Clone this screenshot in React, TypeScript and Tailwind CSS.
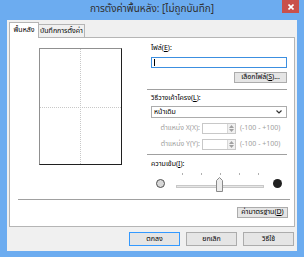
import React from "react";

function Spin({ label }: { label: string }) {
  return (
    <div className="flex items-center h-[11px]">
      <div className="w-[50px] text-right text-[#a0a0a0] pr-[1px] leading-none whitespace-nowrap">{label}</div>
      <div className="ml-[1px] w-[34px] h-[11px] border border-[#c8c8c8] bg-white flex justify-end">
        <div className="w-[8px] h-full border-l border-[#d8d8d8] flex flex-col items-center justify-center gap-[1px] bg-[#f0f0f0]">
          <svg width="5" height="3" viewBox="0 0 5 3"><path d="M0 3 L2.5 0 L5 3 Z" fill="#a0a0a0" /></svg>
          <svg width="5" height="3" viewBox="0 0 5 3"><path d="M0 0 L2.5 3 L5 0 Z" fill="#a0a0a0" /></svg>
        </div>
      </div>
      <div className="ml-[4px] text-[#a0a0a0] leading-none whitespace-nowrap">(-100 - +100)</div>
    </div>
  );
}

export default function App() {
  return (
    <div className="w-[304px] h-[257px] bg-[#6cacf0] flex flex-col text-[7px] text-black whitespace-nowrap font-['Tahoma','Noto_Sans_Thai','Noto_Sans','DejaVu_Sans',sans-serif]">
      <div className="h-[20px] relative flex items-center justify-center text-[10px] text-[#303030]">
        <span className="-mt-[1px]">การตั้งค่าพื้นหลัง: [ไม่ถูกบันทึก]</span>
        <div className="absolute right-[5px] top-0 w-[17px] h-[13px] bg-[#c9504b] flex items-center justify-center">
          <svg width="6" height="6" viewBox="0 0 6 6"><path d="M0.5 0.5 L5.5 5.5 M5.5 0.5 L0.5 5.5" stroke="white" strokeWidth="1.6" /></svg>
        </div>
      </div>
      <div className="flex-1 flex flex-col px-[7px] pb-[6px]">
        <div className="flex-1 bg-[#f0f0f0] flex flex-col px-[2px] pt-[2px]">
          <div className="h-[15px] flex items-end relative z-10">
            <div className="w-[30px] h-[16px] -mb-[1px] bg-white border border-b-0 border-[#b5b5b5] flex items-center justify-center leading-none">พื้นหลัง</div>
            <div className="w-[46px] h-[13px] bg-[#f0f0f0] border border-l-0 border-b-0 border-[#b5b5b5] flex items-center justify-center leading-none">บันทึกการตั้งค่า</div>
          </div>
          <div className="h-[190px] bg-white border border-[#b5b5b5] flex flex-col">
            <div className="flex items-start h-[161px]">
              <div className="ml-[29px] mt-[10px] w-[83px] h-[117px] border border-[#909090] border-r-[#202020] border-b-[#202020] relative">
                <div className="absolute left-[40px] top-0 bottom-0 border-l border-dotted border-[#c8c8c8]" />
                <div className="absolute top-[58px] left-0 right-0 border-t border-dotted border-[#c8c8c8]" />
              </div>
              <div className="ml-[29px] mt-[5px] w-[136px] flex flex-col">
                <div className="h-[10px] flex items-center leading-none">ไฟล์(<u>E</u>):</div>
                <div className="mt-[4px] h-[11px] border border-[#3c8fe0] bg-white flex items-center pl-[2px]">
                  <div className="w-px h-[7px] bg-black" />
                </div>
                <div className="mt-[4px] flex justify-end">
                  <div className="w-[53px] h-[11px] border border-[#acacac] bg-[#e5e5e5] flex items-center justify-center leading-none">เลือกไฟล์(<u>S</u>)...</div>
                </div>
                <div className="mt-[6px] -ml-[4px] h-px bg-[#a0a0a0]" />
                <div className="mt-[3px] h-[10px] flex items-center leading-none">วิธีวางเค้าโครง(<u>L</u>):</div>
                <div className="mt-[3px] h-[12px] border border-[#acacac] bg-white flex items-center justify-between pl-[2px] pr-[4px] leading-none">
                  <span>หน้าเดิม</span>
                  <svg width="6" height="4" viewBox="0 0 6 4"><path d="M0.5 0.5 L3 3 L5.5 0.5" stroke="#333" strokeWidth="1.2" fill="none" /></svg>
                </div>
                <div className="mt-[5px]"><Spin label="ตำแหน่ง X(X):" /></div>
                <div className="mt-[5px]"><Spin label="ตำแหน่ง Y(Y):" /></div>
                <div className="mt-[4px] -ml-[4px] h-px bg-[#a0a0a0]" />
                <div className="mt-[4px] h-[10px] flex items-center leading-none">ความเข้ม(<u>I</u>):</div>
                <div className="mt-[3px] h-[22px] flex items-center">
                  <div className="ml-[5px] w-[9px] h-[9px] rounded-full bg-[#d8d8d8] border border-[#505050]" />
                  <svg className="ml-[11px]" width="89" height="22" viewBox="0 0 89 22">
                    {[6, 25, 44, 63, 82].map((x) => (
                      <line key={x} x1={x + 0.5} y1="1" x2={x + 0.5} y2="3" stroke="#b0b0b0" />
                    ))}
                    <rect x="0.5" y="13.5" width="87" height="2" fill="#e6e6e6" stroke="#c8c8c8" />
                    <path d="M40.5 19.5 L40.5 8.5 L43.5 5.5 L46.5 8.5 L46.5 19.5 Z" fill="#ececec" stroke="#8a8a8a" />
                  </svg>
                  <div className="ml-[8px] w-[9px] h-[9px] rounded-full bg-[#202020]" />
                </div>
              </div>
            </div>
            <div className="ml-[8px] mr-[4px] h-px bg-[#a0a0a0]" />
            <div className="mt-[7px] flex justify-end pr-[6px]">
              <div className="w-[51px] h-[11px] border border-[#acacac] bg-[#e5e5e5] flex items-center justify-center leading-none">ค่ามาตรฐาน(<u>D</u>)</div>
            </div>
          </div>
          <div className="mt-[5px] flex justify-end gap-[6px] pr-[1px]">
            <div className="w-[51px] h-[14px] border border-[#3399ff] bg-[#e5e5e5] flex items-center justify-center leading-none">ตกลง</div>
            <div className="w-[51px] h-[14px] border border-[#acacac] bg-[#e5e5e5] flex items-center justify-center leading-none">ยกเลิก</div>
            <div className="w-[51px] h-[14px] border border-[#acacac] bg-[#e5e5e5] flex items-center justify-center leading-none">วิธีใช้</div>
          </div>
        </div>
      </div>
    </div>
  );
}
